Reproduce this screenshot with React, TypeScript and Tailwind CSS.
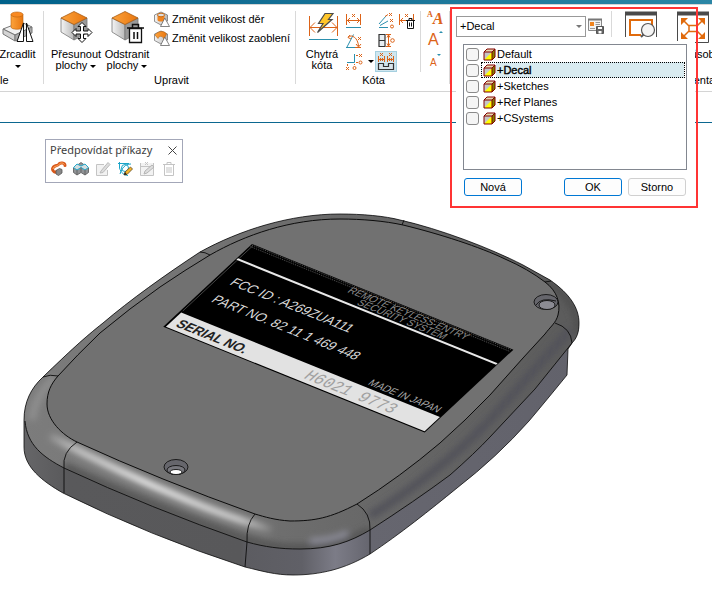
import { useState } from "react";
import type { ReactNode } from "react";

const layers = ["Default", "+Decal", "+Sketches", "+Ref Planes", "+CSystems"];

const orange = "#dc6318";
const teal = "#2b8fae";

/* ---------- icons ---------- */

function Icon({ size = 16, children }: { size?: number; children: ReactNode }) {
  return (
    <svg width={size} height={size} viewBox={`0 0 ${size} ${size}`} fill="none" className="shrink-0 overflow-visible" aria-hidden="true">
      {children}
    </svg>
  );
}

function Defs() {
  return (
    <svg width="0" height="0" className="absolute" aria-hidden="true">
      <defs>
        <linearGradient id="or" x1="0" y1="0" x2="1" y2="0">
          <stop offset="0" stopColor="#fca33c" />
          <stop offset="1" stopColor="#e8760f" />
        </linearGradient>
        <linearGradient id="gr" x1="0" y1="0" x2="1" y2="0">
          <stop offset="0" stopColor="#f4f4f4" />
          <stop offset="1" stopColor="#b9b9b9" />
        </linearGradient>
      </defs>
    </svg>
  );
}

function Cube() {
  return (
    <g strokeLinejoin="round">
      <path d="M1 7 14 13.500V29L1 21Z" fill="url(#gr)" stroke="#777" strokeWidth=".8" />
      <path d="M27 7 14 13.500V29L27 22Z" fill="#999" stroke="#777" strokeWidth=".8" />
      <path d="M1 7 14 .5 27 7 14 13.500Z" fill="url(#or)" stroke="#a85a10" strokeWidth=".8" />
    </g>
  );
}

function MirrorIcon() {
  return (
    <Icon size={32}>
      <path d="M1 18 19 11 30 16 13 24Z" fill="#f2f2f2" stroke="#777" />
      <path d="M1 18 13 24V30L1 23Z" fill="#d4d4d4" stroke="#777" />
      <path d="M13 24 30 16V22L13 30Z" fill="#aaa" stroke="#777" />
      <path d="M9 3.500V16c0 3 12 3 12 0V3.500Z" fill="url(#or)" stroke="#b8620e" strokeWidth=".6" />
      <ellipse cx="15" cy="3.500" rx="6" ry="2.500" fill="#f98a22" stroke="#b8620e" strokeWidth=".6" />
      <path d="M21.500 12V30.500H15ZM24.500 12V30.500H31Z" fill="#fff" stroke="#111" />
    </Icon>
  );
}

function MoveFaceIcon() {
  return (
    <Icon size={32}>
      <Cube />
      <path
        d="M22 11.500 26 15.500H23.500V20H28V17.500L32 21.500 28 25.500V23H23.500V27.500H26L22 31.500 18 27.500H20.500V23H16V25.500L12 21.500 16 17.500V20H20.500V15.500H18Z"
        fill="#fff"
        stroke="#111"
      />
    </Icon>
  );
}

function DeleteFaceIcon() {
  return (
    <Icon size={32}>
      <Cube />
      <path d="M18.500 17.500H30.500V31.500H18.500Z" fill="#fff" stroke="#111" strokeWidth="1.300" />
      <path d="M16 17H33M21.500 17V13.500H27.500V17M23 21V28M26.500 21V28" stroke="#111" strokeWidth="1.500" />
    </Icon>
  );
}

function HoleIcon({ round }: { round?: boolean }) {
  return (
    <Icon>
      <path d="M.5 4 7 1 13.500 4V10L7 14 .5 10.500Z" fill="url(#gr)" stroke="#777" strokeWidth=".8" />
      {round ? (
        <path d="M1 5C4 1 10 0 12.500 4L10 9C8 5 5 6 4 8.500Z" fill="url(#or)" stroke="#b8620e" strokeWidth=".6" />
      ) : (
        <>
          <path d="M3.500 4V9c0 2 7 2 7 0V4Z" fill="#f0841f" />
          <ellipse cx="7" cy="4" rx="3.500" ry="1.800" fill="#ddd" stroke="#c96a12" />
        </>
      )}
      <path d="M10.800 7 15.500 15.500H6.500Z" fill="#fff" stroke="#666" strokeWidth=".8" />
    </Icon>
  );
}

function SmartDimIcon() {
  return (
    <Icon size={32}>
      <path d="M3.500 5V25M31.500 5V25M4 16.500H31M9 11.500 4 16.500 9 21.500M26 11.500 31 16.500 26 21.500" stroke={orange} />
      <path d="M3 28.500H32" stroke={teal} />
      <path d="M19 2.500H27L22.500 8.500H26L11.500 21.500 17 12.500H12.500Z" fill="#ffc62b" stroke="#4a4a4a" strokeWidth="1.200" />
    </Icon>
  );
}

function DimBetweenIcon({ trash }: { trash?: boolean }) {
  return (
    <Icon>
      <path d="M.5 1V12M14.500 1V12M1 7.500H14M4 5 1.500 7.500 4 10M11 5 13.500 7.500 11 10M6 1 9 4M9 1 6 4" stroke={orange} />
      {trash ? (
        <>
          <path d="M8.500 7.500H14.500V15.500H8.500Z" fill="#fff" stroke="#111" />
          <path d="M7 7.500H16M10 7V5.500H13V7M10.500 9.500V13.500M12.500 9.500V13.500" stroke="#111" />
        </>
      ) : (
        <path d="M0 14.500H15" stroke={teal} />
      )}
    </Icon>
  );
}

function AngularIcon() {
  return (
    <Icon>
      <path d="M1 14 7.500 1.500M0 14.500H9" stroke={teal} />
      <path d="M2 4C6 1 12 5 12.500 13M4 2 2 4.500 5 6M10 11 12.500 14 15 11M12 4 15 7M15 4 12 7M9 14.500H15" stroke={orange} />
    </Icon>
  );
}

function OrdinateIcon() {
  return (
    <Icon>
      <path d="M8.500 0V8.500H1" stroke={teal} />
      <path d="M10 1.500H12M10 8.500H12M1.500 10V12M8.500 10V11M13 0 16 3M16 0 13 3M0 13 3 16M3 13 0 16" stroke={orange} />
      <circle cx="14.500" cy="8.500" r="1.500" stroke={orange} />
      <circle cx="8.500" cy="14" r="1.500" stroke={orange} />
    </Icon>
  );
}

function RadialIcon() {
  return (
    <Icon>
      <path d="M1 11 8 3M2 12.500 10 8M1 14.500H10" stroke={teal} />
      <path d="M11 0 14 3M14 0 11 3M12 6 15 9M15 6 12 9M7 3.500 10 1.500" stroke={orange} />
      <circle cx="14" cy="13.500" r="1.500" stroke={orange} />
    </Icon>
  );
}

function SymmetricIcon() {
  return (
    <Icon>
      <path d="M1 1.500H7V13.500H1ZM1 7.500H7" fill="#e8eef2" stroke="#333" strokeWidth="1.200" />
      <path d="M8 1.500H13M8 13.500H13M10.500 2V13M9 4.500 10.500 2 12 4.500M9 10.500 10.500 13 12 10.500" stroke={orange} />
      <circle cx="14.500" cy="7.500" r="1.800" stroke={orange} />
    </Icon>
  );
}

function AutoDimIcon() {
  return (
    <Icon size={18}>
      <path d="M1.500 3V9M7.500 3V9M10.500 3V9M16.500 3V9M1 6.500H8M10 6.500H17M3 0 6 3M6 0 3 3M12 0 15 3M15 0 12 3M3.500 5V8M5.500 5V8M12.500 5V8M14.500 5V8" stroke={orange} />
      <path d="M1.500 10.500H6.500V13.500H11.500V10.500H16.500V16.500H1.500Z" fill="#d8e4ea" stroke="#333" strokeWidth="1.200" />
    </Icon>
  );
}

function SaveViewIcon() {
  return (
    <Icon>
      <path d="M.5 1.500H13.500V12.500H.5Z" fill="#f4f4f4" stroke="#888" />
      <path d="M0 1.500H14" stroke="#777" strokeWidth="2" />
      <path d="M2 4H6V8H2Z" fill="#f0841f" />
      <path d="M7.500 4.500H12M7.500 6.500H12M2 10.500H7" stroke="#999" />
      <path d="M8.500 8.500H15.500V15.500H8.500Z" fill="#666" stroke="#555" />
      <path d="M10 9H14V11H10ZM10.500 13H13.500V15.500H10.500Z" fill="#fff" />
    </Icon>
  );
}

function ZoomAreaIcon() {
  return (
    <Icon size={32}>
      <path d="M.5 1V26M31.500 1V26" stroke="#4a4a4a" />
      <path d="M0 2.500H32" stroke="#4a4a4a" strokeWidth="4" />
      <path d="M16 24H5V9H27V16" stroke="#e06a0c" strokeWidth="2" />
      <circle cx="23" cy="19" r="6.500" fill="#f5f5f5" stroke="#555" strokeWidth="1.200" />
      <path d="M18.500 23.500 16 26" stroke="#555" strokeWidth="2" />
    </Icon>
  );
}

function FitIcon() {
  return (
    <Icon size={32}>
      <path d="M.5 1V31.500H31.500V1" fill="#fff" stroke="#4a4a4a" />
      <path d="M0 2.500H32" stroke="#4a4a4a" strokeWidth="4" />
      <path d="M4 7H11L4 14ZM28 7H21L28 14ZM4 28H11L4 21ZM28 28H21L28 21Z" fill="#e06a0c" />
      <path d="M7 10 12 15M25 10 20 15M7 25 12 20M25 25 20 20M12 14.500H20V20.500H12Z" stroke="#e06a0c" strokeWidth="1.500" />
    </Icon>
  );
}

function LayerIcon() {
  return (
    <svg width="13" height="13" viewBox="0 0 13 13" fill="none" className="shrink-0" aria-hidden="true">
      <path d="M1 4H9V12H1Z" fill="#ff0" />
      <path d="M1 4H9L1 12Z" fill="#c6c6c6" />
      <path d="M1 4 4 1H12L9 4Z" fill="#e8d8b0" />
      <path d="M9 4 12 1V9L9 12Z" fill="#808000" />
      <path d="M1 4 4 1H12V9L9 12H1ZM1 4H9V12M9 4 12 1" stroke="#800000" />
    </svg>
  );
}

function Caret() {
  return <span className="inline-block border-x-3 border-t-3 border-x-transparent border-t-black align-middle" />;
}

/* ---------- ribbon ---------- */

function Separator({ height = "h-[73px]" }: { height?: string }) {
  return <div className={`w-px shrink-0 bg-[#d9d9d9] ${height}`} />;
}

function BigButton({ icon, width, children }: { icon: ReactNode; width: string; children: ReactNode }) {
  return (
    <button className={`flex shrink-0 flex-col items-center gap-[6px] whitespace-nowrap text-center leading-[11px] ${width}`}>
      {icon}
      <span>{children}</span>
    </button>
  );
}

function IconButton({ label, children }: { label: string; children: ReactNode }) {
  return (
    <button aria-label={label} className="flex h-5 items-center justify-center">
      {children}
    </button>
  );
}

function Ribbon({ layer, onLayer }: { layer: string; onLayer: (l: string) => void }) {
  return (
    <header>
      <div className="h-1 bg-linear-to-r from-[#00618a] to-[#2b86a5]" />
      <div className="flex h-[88px] items-start overflow-hidden border-y border-[#d4d4d4] pt-[6px]">
        <section className="flex h-[75px] w-[43px] shrink-0 flex-col justify-between">
          <BigButton icon={<MirrorIcon />} width="w-[35px]">
            Zrcadlit
            <br />
            <Caret />
          </BigButton>
          <h2 className="leading-3">le</h2>
        </section>
        <Separator />

        <section className="flex h-[75px] w-[251px] shrink-0 flex-col justify-between">
          <div className="flex pl-[6px]">
            <BigButton icon={<MoveFaceIcon />} width="w-[52px]">
              Přesunout
              <br />
              plochy <Caret />
            </BigButton>
            <BigButton icon={<DeleteFaceIcon />} width="w-[50px]">
              Odstranit
              <br />
              plochy <Caret />
            </BigButton>
            <div className="flex flex-col gap-[3px] whitespace-nowrap pl-[2px]">
              <button className="flex h-4 items-center gap-[2px]">
                <HoleIcon />
                Změnit velikost děr
              </button>
              <button className="flex h-4 items-center gap-[2px]">
                <HoleIcon round />
                Změnit velikost zaoblení
              </button>
            </div>
          </div>
          <h2 className="pl-1 text-center leading-3">Upravit</h2>
        </section>
        <Separator />

        <section className="flex h-[75px] w-[153px] shrink-0 flex-col justify-between">
          <div className="flex h-[61px]">
            <div className="pl-[6px]">
              <BigButton icon={<SmartDimIcon />} width="w-10">
                Chytrá
                <br />
                kóta
              </BigButton>
            </div>
            <div className="grid w-[75px] grid-cols-[24px_9px_22px_20px] items-center">
              <IconButton label="Vzdálenost"><DimBetweenIcon /></IconButton>
              <span />
              <IconButton label="Poloměr"><RadialIcon /></IconButton>
              <IconButton label="Odstranit kótu"><DimBetweenIcon trash /></IconButton>
              <IconButton label="Úhel"><AngularIcon /></IconButton>
              <span />
              <IconButton label="Symetrická kóta"><SymmetricIcon /></IconButton>
              <span />
              <IconButton label="Souřadnice"><OrdinateIcon /></IconButton>
              <button aria-label="Další kóty" className="flex justify-center"><Caret /></button>
              <button aria-label="Automatická kóta" className="flex h-[21px] items-center justify-center border border-[#a5cfdf] bg-[#cfe6ef]">
                <AutoDimIcon />
              </button>
            </div>
            <div className="pl-[3px]">
              <Separator height="h-[61px]" />
            </div>
            <div className="flex flex-col items-center pl-[6px] text-[#dc6318]">
              <button aria-label="Styl písma" className="flex h-4 items-start font-['Liberation_Serif',serif] font-bold">
                <span className="text-[8px] leading-[8px]">A</span>
                <span className="text-[16px] italic leading-4">A</span>
              </button>
              <button aria-label="Zvětšit písmo" className="flex h-7 items-center text-[16px]">
                A<span className="mb-4 border-x-2 border-b-2 border-x-transparent border-b-[#2b8fae]" />
              </button>
              <button aria-label="Zmenšit písmo" className="flex h-5 items-center text-[10px]">
                A<span className="mb-4 border-x-2 border-t-2 border-x-transparent border-t-[#2b8fae]" />
              </button>
            </div>
          </div>
          <h2 className="pl-[2px] text-center leading-3">Kóta</h2>
        </section>
        <Separator />

        <section className="flex min-w-0 flex-1 items-start">
          <div className="relative ml-[6px] mt-[5px] shrink-0">
            <select
              aria-label="Vrstva"
              value={layer}
              onChange={(e) => onLayer(e.target.value)}
              className="h-[21px] w-[130px] appearance-none border border-[#999] bg-white pl-[3px] text-[11px]"
            >
              {layers.map((l) => (
                <option key={l}>{l}</option>
              ))}
            </select>
            <span className="pointer-events-none absolute right-1 top-[9px] border-x-3 border-t-3 border-x-transparent border-t-[#777]" />
          </div>
          <button aria-label="Uložit zobrazení" className="ml-[2px] mt-[7px] shrink-0">
            <SaveViewIcon />
          </button>
          <div className="pl-[7px]">
            <Separator height="h-[26px]" />
          </div>
          <div className="flex h-[75px] min-w-0 flex-1 flex-col justify-between overflow-hidden">
            <div className="flex">
              <button aria-label="Zvětšit oblast" className="ml-[13px] h-8 w-8 shrink-0">
                <ZoomAreaIcon />
              </button>
              <div className="ml-[5px]">
                <BigButton icon={<FitIcon />} width="w-[62px]">
                  Přizpůsobit
                </BigButton>
              </div>
            </div>
            <h2 className="pl-[67px] leading-3">Orientace</h2>
          </div>
        </section>
      </div>
    </header>
  );
}

/* ---------- layer list ---------- */

function LayerPopup({ layer, onLayer }: { layer: string; onLayer: (l: string) => void }) {
  return (
    <div className="pointer-events-none absolute left-[450px] top-[7px] flex w-[248px] flex-col border-2 border-[#ff3434] pb-[2px] pl-1 pr-[1px] pt-8">
      <div className="pointer-events-auto bg-white pb-2 pl-[7px] pr-[8px] pt-[3px]">
        <ul className="h-[126px] border border-[#828790] py-px pl-[2px] pr-px">
          {layers.map((l) => (
            <li key={l} className="flex h-4 items-center">
              <input
                id={l}
                type="checkbox"
                className="h-[13px] w-[13px] shrink-0 appearance-none rounded-[3px] border border-[#8a8a8a] bg-[#f5f5f5] checked:bg-[#0067c0]"
              />
              <label
                htmlFor={l}
                onClick={() => onLayer(l)}
                className={`ml-[2px] flex h-4 flex-1 items-center border border-dotted pl-px text-[11px] ${
                  l === layer ? "border-black bg-linear-to-r from-white from-[14px] to-[#d9ebf0] to-[14px] [-webkit-text-stroke:0.4px_black]" : "border-transparent"
                }`}
              >
                <LayerIcon />
                <span className="ml-px">{l}</span>
              </label>
            </li>
          ))}
        </ul>
        <div className="mt-2 flex h-[18px] px-px text-[11px]">
          <button className="w-[58px] rounded-[3px] border border-[#0078d4] bg-[#fdfdfd]">Nová</button>
          <button className="ml-auto w-[58px] rounded-[3px] border border-[#0078d4] bg-[#fdfdfd]">OK</button>
          <button className="ml-[6px] w-[58px] rounded-[3px] border border-[#d0d0d0] bg-[#fdfdfd]">Storno</button>
        </div>
      </div>
    </div>
  );
}

/* ---------- command prediction palette ---------- */

function PredictPalette() {
  return (
    <div className="absolute left-[45px] top-4 h-[44px] w-[138px] border border-[#a3a7b8] bg-white px-1">
      <div className="flex h-5 items-center justify-between font-['Noto_Sans',sans-serif] text-[11px] text-[#3d3d3d]">
        <span className="whitespace-nowrap">Předpovídat příkazy</span>
        <button aria-label="Zavřít" className="mr-[1px]">
          <svg width="9" height="9" viewBox="0 0 9 9" stroke="#444" aria-hidden="true">
            <path d="M.5.5 8.500 8.500M8.500.5.5 8.500" />
          </svg>
        </button>
      </div>
      <div className="flex gap-[6px] pl-px pt-px">
        <button aria-label="Tažení">
          <Icon>
            <path d="M14 4.500C14 1.500 9 1 7.500 3.500C6.500 5 2 4 1.500 8C1.500 10.500 4 12 6 10.500" stroke="#d9581a" strokeWidth="3" strokeLinecap="round" />
            <path d="M13.500 3.500C12 1.500 9 1.500 8 3.500C7 5.500 2.500 4.500 2 8" stroke="#ffb066" />
            <path d="M5 9.500 8.500 7.500 11 8.500V12L7.500 14.500 5 13Z" fill="#888" stroke="#555" strokeWidth=".8" />
          </Icon>
        </button>
        <button aria-label="Zaoblení">
          <Icon>
            <path d="M.5 7 8 1.500 15.500 7V11.500L12 14 8 11.500 4 14 .5 11.500Z" fill="#909396" stroke="#555" strokeWidth=".8" />
            <path d="M.5 6.500 4 3 8 5 12 3 15.500 6.500 12 9 8 6.500 4 9Z" fill="#d4dde0" stroke="#22a9cc" />
            <path d="M4 9V14M12 9V14M8 6.500V11" stroke="#666" />
          </Icon>
        </button>
        <button aria-label="Upravit">
          <Icon>
            <path d="M9 3.500H1.500V14.500H12.500V9" stroke="#c4c4c4" fill="#f2f2f2" />
            <path d="M6 10 13 1.500 15 3.500 8 11.500 5 12Z" fill="#ddd" stroke="#bbb" />
          </Icon>
        </button>
        <button aria-label="Skica">
          <Icon>
            <path d="M1 2.500H12M2.500 1V7C4 12 7 14 11 14.500M3 13C5 7 8 3 14 3" stroke="#19a4c8" />
            <circle cx="8" cy="7" r="3.500" stroke="#19a4c8" />
            <path d="M7 14 8 11 13.500 6 15.500 8 10 13.500Z" fill="#f4b32c" stroke="#5c4822" strokeWidth=".8" />
            <path d="M7 14 8 11 10 13.500Z" fill="#222" />
          </Icon>
        </button>
        <button aria-label="Upravit kótu">
          <Icon>
            <path d="M1.500 2V14.500H14.500V2M2 5.500H14M6 1 9 4M9 1 6 4" stroke="#c4c4c4" fill="#f2f2f2" />
            <path d="M5 13 6 10 13 4 15 6 8 12Z" fill="#ddd" stroke="#b5b5b5" />
          </Icon>
        </button>
        <button aria-label="Odstranit">
          <Icon>
            <path d="M3.500 3.500H12.500V14.500H3.500ZM2 3.500H14M6 3V1.500H10V3M6 6V12M8 6V12M10 6V12" stroke="#c4c4c4" />
          </Icon>
        </button>
      </div>
    </div>
  );
}

/* ---------- 3D model ---------- */

const silhouette =
  "M24 420C24 402 31 388 43 377C70 351 84 338 103 323C130 300 165 275 200 252C240 230 290 214 340 214C362 214 385 216 400 220C440 229 490 248 523 265L550 280C570 294 579 308 579 323C579 332 577 338 572 343L568 349L567 375Q545 402 529 421Q497 457 457 488C430 510 400 534 370 554C345 569 320 575 293 575C275 575 262 571 245 567Q150 536 63 493C42 481 24 467 24 447Z";
const lowerEdge =
  "M25 421C27 445 43 457 64 468Q150 508 247 542C265 547 280 549 300 549C330 549 350 542 370 530Q415 501 450 475Q475 453 490 437L535 389 572 343";
const topFace =
  "M58 376Q77 355 100 333Q130 308 160 287Q185 270 210 255C245 235 290 219 340 219C362 219 385 221 403 225C440 234 480 247 505 259Q528 269 545 282C557 291 561 303 558 315C556 323 550 327 545 334L523 358 490 395Q465 421 440 443Q400 477 357 504C330 518 315 521 290 521C275 520 265 517 255 514Q160 480 77 442C62 435 47 420 47 404C47 392 51 384 58 376Z";

function Model() {
  return (
    <svg viewBox="0 123 712 486" className="block h-auto w-full" role="img" aria-label="Model dálkového ovladače">
      <defs>
        <linearGradient id="side" gradientUnits="userSpaceOnUse" x1="24" y1="0" x2="580" y2="0">
          <stop offset="0" stopColor="#666668" />
          <stop offset=".08" stopColor="#59595b" />
          <stop offset=".39" stopColor="#58585a" />
          <stop offset=".4" stopColor="#5c5c61" />
          <stop offset=".5" stopColor="#606067" />
          <stop offset=".56" stopColor="#7c7c87" />
          <stop offset=".62" stopColor="#66666f" />
          <stop offset="1" stopColor="#62626b" />
        </linearGradient>
        <linearGradient id="rim" gradientUnits="userSpaceOnUse" x1="24" y1="420" x2="560" y2="400">
          <stop offset="0" stopColor="#7c7c7c" />
          <stop offset=".35" stopColor="#737373" />
          <stop offset=".6" stopColor="#696969" />
          <stop offset="1" stopColor="#5c5c5c" />
        </linearGradient>
        <linearGradient id="shine" gradientUnits="userSpaceOnUse" x1="45" y1="430" x2="275" y2="532">
          <stop offset="0" stopColor="#fff" stopOpacity="0" />
          <stop offset=".15" stopColor="#ddd" stopOpacity=".8" />
          <stop offset=".45" stopColor="#eee" />
          <stop offset=".85" stopColor="#ddd" stopOpacity=".9" />
          <stop offset="1" stopColor="#fff" stopOpacity="0" />
        </linearGradient>
        <filter id="soft" x="-20%" y="-20%" width="140%" height="140%">
          <feGaussianBlur stdDeviation="3" />
        </filter>
        <clipPath id="bodyClip">
          <path d={silhouette} />
        </clipPath>
        <clipPath id="rimClip" clipPath="url(#bodyClip)">
          <path d="M25 421C27 445 43 457 64 468Q150 508 247 542C265 547 280 549 300 549C330 549 350 542 370 530Q415 501 450 475Q475 453 490 437L535 389 572 343L600 330 590 280 500 205H180L20 350V421Z" />
        </clipPath>
      </defs>

      <path d={silhouette} fill="url(#side)" />
      <g clipPath="url(#rimClip)">
        <path d={silhouette} fill="url(#rim)" />
        <g filter="url(#soft)" fill="none">
          <path d="M64 466Q150 506 247 540C290 553 335 550 370 530" stroke="#555" strokeWidth="8" />
          <path d="M370 516Q440 472 490 420L570 330" stroke="#53535a" strokeWidth="9" />
          <path d="M32 420C34 402 42 390 54 378" stroke="#8e8e8e" strokeWidth="8" />
          <path d="M50 436Q120 473 187 500Q225 516 272 530" stroke="url(#shine)" strokeWidth="7" />
          <path d="M310 541Q330 541 348 533" stroke="#8c8c98" strokeWidth="6" />
          <path d="M577 335C580 310 565 292 545 281" stroke="#505050" strokeWidth="7" />
        </g>
      </g>
      <path d={topFace} fill="#717171" />

      <g fill="none" stroke="#0c0c0c">
        <path d={silhouette} strokeWidth=".8" />
        <path d={lowerEdge} strokeWidth=".9" />
        <path d={topFace} />
        <path d="M200 252Q205 252 210 255M43 377Q50 374 58 376M77 442Q62 452 64 468V493M255 514Q246 524 247 542L245 567M357 504Q371 513 370 530V554M555 323Q571 328 572 343M402 225 404 220M545 282 551 281" strokeWidth=".9" />
      </g>

      <g stroke="#111" strokeWidth=".9">
        <ellipse cx="546" cy="302" rx="12" ry="7.500" fill="#66666c" />
        <ellipse cx="547" cy="305" rx="8" ry="4.500" fill="#8b8b93" />
        <path d="M536 305Q541 297 556 301" fill="none" />
        <ellipse cx="176" cy="467" rx="12" ry="7.500" fill="#66666c" />
        <ellipse cx="176" cy="470" rx="9" ry="4.500" fill="#77777d" />
        <ellipse cx="176" cy="472" rx="6" ry="2.500" fill="#fff" />
      </g>

      {/* decal lies on the top face */}
      <g transform="translate(252 244) rotate(22) skewX(-25)" fontFamily="Liberation Sans, Arial, sans-serif" fill="#d9d9d9">
        <path d="M0 0H282V110H0Z" fill="#000" />
        <path d="M1 1H281M1 3H281" stroke="#666" strokeWidth=".7" strokeDasharray="1 1" />
        <path d="M2 1V88" stroke="#777" strokeWidth=".5" />
        <path d="M2 90H281V109H2Z" fill="#e2e2e2" />
        <path d="M1 19.500H281" stroke="#e8e8e8" strokeWidth="2" />
        <text x="110" y="9" fontSize="10" fill="#8a8a8a">REMOTE KEYLESS-ENTRY</text>
        <text x="127" y="17" fontSize="10" fill="#8a8a8a">SECURITY SYSTEM</text>
        <text x="15" y="46" fontSize="13">FCC ID : A269ZUA111</text>
        <text x="15" y="69" fontSize="13">PART NO. 82 11 1 469 448</text>
        <text x="200" y="87" fontSize="10" fill="#aaa">MADE IN JAPAN</text>
        <text x="8" y="105" fontSize="13" fontWeight="bold" fill="#222">SERIAL NO.</text>
        <text x="146" y="105" fontSize="16" fontFamily="Liberation Mono, monospace" fill="#a0a0a0">H6021 9773</text>
      </g>
    </svg>
  );
}

export default function App() {
  const [layer, setLayer] = useState("+Decal");

  return (
    <div className="relative min-h-screen overflow-hidden bg-white font-['Liberation_Sans',Arial,sans-serif] text-[11px] text-black">
      <Defs />
      <Ribbon layer={layer} onLayer={setLayer} />
      <div className="h-[31px] border-b border-[#0b6790]" />
      <main className="relative">
        <Model />
        <PredictPalette />
      </main>
      <LayerPopup layer={layer} onLayer={setLayer} />
    </div>
  );
}
